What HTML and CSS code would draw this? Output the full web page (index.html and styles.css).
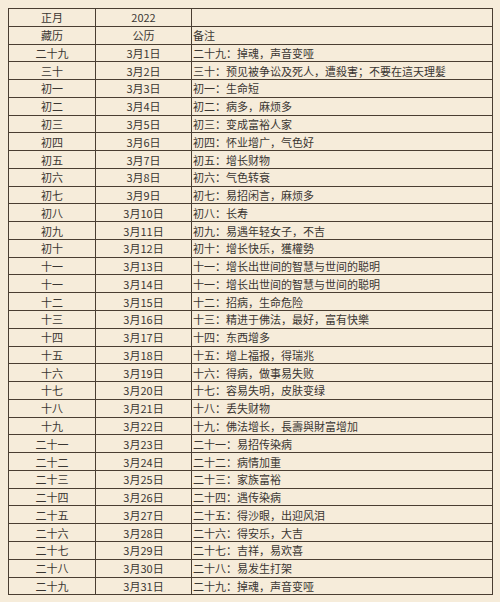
FILE: index.html
```html
<!DOCTYPE html>
<html lang="zh">
<head>
<meta charset="utf-8">
<link rel="stylesheet" href="styles.css">
</head>
<body>
<table class="cal">
<colgroup><col class="c1"><col class="c2"><col class="c3"></colgroup>
<tbody>
<tr><td>正月</td><td>2022</td><td class="note"></td></tr>
<tr><td>藏历</td><td>公历</td><td class="note">备注</td></tr>
<tr><td>二十九</td><td>3月1日</td><td class="note">二十九：掉魂，声音变哑</td></tr>
<tr><td>三十</td><td>3月2日</td><td class="note">三十：预见被争讼及死人，遭殺害；不要在這天理髮</td></tr>
<tr><td>初一</td><td>3月3日</td><td class="note">初一：生命短</td></tr>
<tr><td>初二</td><td>3月4日</td><td class="note">初二：病多，麻烦多</td></tr>
<tr><td>初三</td><td>3月5日</td><td class="note">初三：变成富裕人家</td></tr>
<tr><td>初四</td><td>3月6日</td><td class="note">初四：怀业增广，气色好</td></tr>
<tr><td>初五</td><td>3月7日</td><td class="note">初五：增长财物</td></tr>
<tr><td>初六</td><td>3月8日</td><td class="note">初六：气色转衰</td></tr>
<tr><td>初七</td><td>3月9日</td><td class="note">初七：易招闲言，麻烦多</td></tr>
<tr><td>初八</td><td>3月10日</td><td class="note">初八：长寿</td></tr>
<tr><td>初九</td><td>3月11日</td><td class="note">初九：易遇年轻女子，不吉</td></tr>
<tr><td>初十</td><td>3月12日</td><td class="note">初十：增长快乐，獲權勢</td></tr>
<tr><td>十一</td><td>3月13日</td><td class="note">十一：增长出世间的智慧与世间的聪明</td></tr>
<tr><td>十一</td><td>3月14日</td><td class="note">十一：增长出世间的智慧与世间的聪明</td></tr>
<tr><td>十二</td><td>3月15日</td><td class="note">十二：招病，生命危险</td></tr>
<tr><td>十三</td><td>3月16日</td><td class="note">十三：精进于佛法，最好，富有快樂</td></tr>
<tr><td>十四</td><td>3月17日</td><td class="note">十四：东西增多</td></tr>
<tr><td>十五</td><td>3月18日</td><td class="note">十五：增上福报，得瑞兆</td></tr>
<tr><td>十六</td><td>3月19日</td><td class="note">十六：得病，做事易失败</td></tr>
<tr><td>十七</td><td>3月20日</td><td class="note">十七：容易失明，皮肤变绿</td></tr>
<tr><td>十八</td><td>3月21日</td><td class="note">十八：丢失财物</td></tr>
<tr><td>十九</td><td>3月22日</td><td class="note">十九：佛法增长，長壽與財富增加</td></tr>
<tr><td>二十一</td><td>3月23日</td><td class="note">二十一：易招传染病</td></tr>
<tr><td>二十二</td><td>3月24日</td><td class="note">二十二：病情加重</td></tr>
<tr><td>二十三</td><td>3月25日</td><td class="note">二十三：家族富裕</td></tr>
<tr><td>二十四</td><td>3月26日</td><td class="note">二十四：遇传染病</td></tr>
<tr><td>二十五</td><td>3月27日</td><td class="note">二十五：得沙眼，出迎风泪</td></tr>
<tr><td>二十六</td><td>3月28日</td><td class="note">二十六：得安乐，大吉</td></tr>
<tr><td>二十七</td><td>3月29日</td><td class="note">二十七：吉祥，易欢喜</td></tr>
<tr><td>二十八</td><td>3月30日</td><td class="note">二十八：易发生打架</td></tr>
<tr><td>二十九</td><td>3月31日</td><td class="note">二十九：掉魂，声音变哑</td></tr>
</tbody>
</table>
</body>
</html>
```
FILE: styles.css
```css
html, body {
  margin: 0;
  background: #f6ecda;
}
body {
  padding: 8px;
  font-family: "Noto Sans CJK SC", "Liberation Sans", sans-serif;
  color: #3a3632;
}
.cal {
  border-collapse: collapse;
  table-layout: fixed;
  width: 484px;
  font-size: 11px;
}
.c1 { width: 87px; }
.c2 { width: 96px; }
.c3 { width: 301px; }
.cal tr { height: 17.78px; }
.cal td {
  border: 1px solid #4a3e32;
  padding: 0;
  text-align: center;
  line-height: 14px;
  white-space: nowrap;
  overflow: hidden;
}
.cal td.note {
  text-align: left;
  padding-left: 1px;
}
```
